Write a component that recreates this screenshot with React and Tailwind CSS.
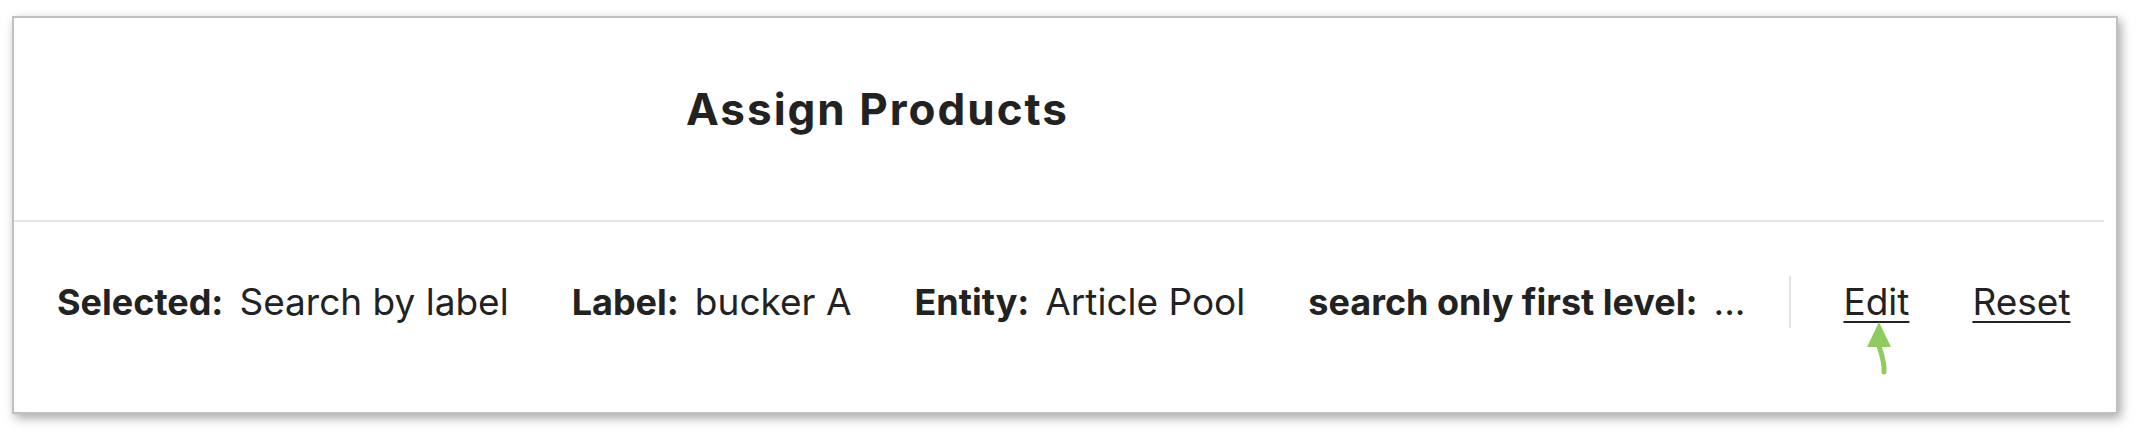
export default function App() {
  const fields = [
    { label: "Selected:", value: "Search by label" },
    { label: "Label:", value: "bucker A" },
    { label: "Entity:", value: "Article Pool" },
    { label: "search only first level:", value: "..." },
  ];
  return (
    <div className="w-[2136px] h-[432px] bg-white pt-[16px] pl-[12px] font-['Inter','Liberation_Sans',sans-serif] text-[#222222]">
      <div className="w-[2106px] h-[398px] bg-white border-2 border-[#c0c0c0] shadow-[3px_4px_10px_rgba(0,0,0,0.35)] flex flex-col">
        <div className="h-[202px] flex items-center pl-[672px] pb-[20px]">
          <h1 className="text-[44px] font-bold tracking-[2px]">Assign Products</h1>
        </div>
        <div className="h-[2px] bg-[#e6e6e6] mr-[12px]" />
        <div className="flex-1 flex items-center pl-[43px] pb-[30px] text-[37px]">
          <div className="flex items-baseline gap-[63px]">
            {fields.map((f) => (
              <div key={f.label} className="flex items-baseline gap-[16px] whitespace-nowrap">
                <span className="font-bold text-[36px]">{f.label}</span>
                <span className="font-normal">{f.value}</span>
              </div>
            ))}
          </div>
          <div className="w-[2px] h-[52px] bg-[#e3e3e3] ml-[44px]" />
          <div className="relative ml-[52px]">
            <span className="underline decoration-2 underline-offset-[6px]">Edit</span>
            <svg className="absolute left-[20px] top-[46px]" width="32" height="56" viewBox="0 0 32 56">
              <path d="M21 52 C 22 44, 19 35, 16 26" fill="none" stroke="#8fcc5f" strokeWidth="5" strokeLinecap="round" />
              <path d="M16 2 L 4 27 L 28 27 Z" fill="#8fcc5f" />
            </svg>
          </div>
          <span className="ml-[63px] underline decoration-2 underline-offset-[6px]">Reset</span>
        </div>
      </div>
    </div>
  );
}
